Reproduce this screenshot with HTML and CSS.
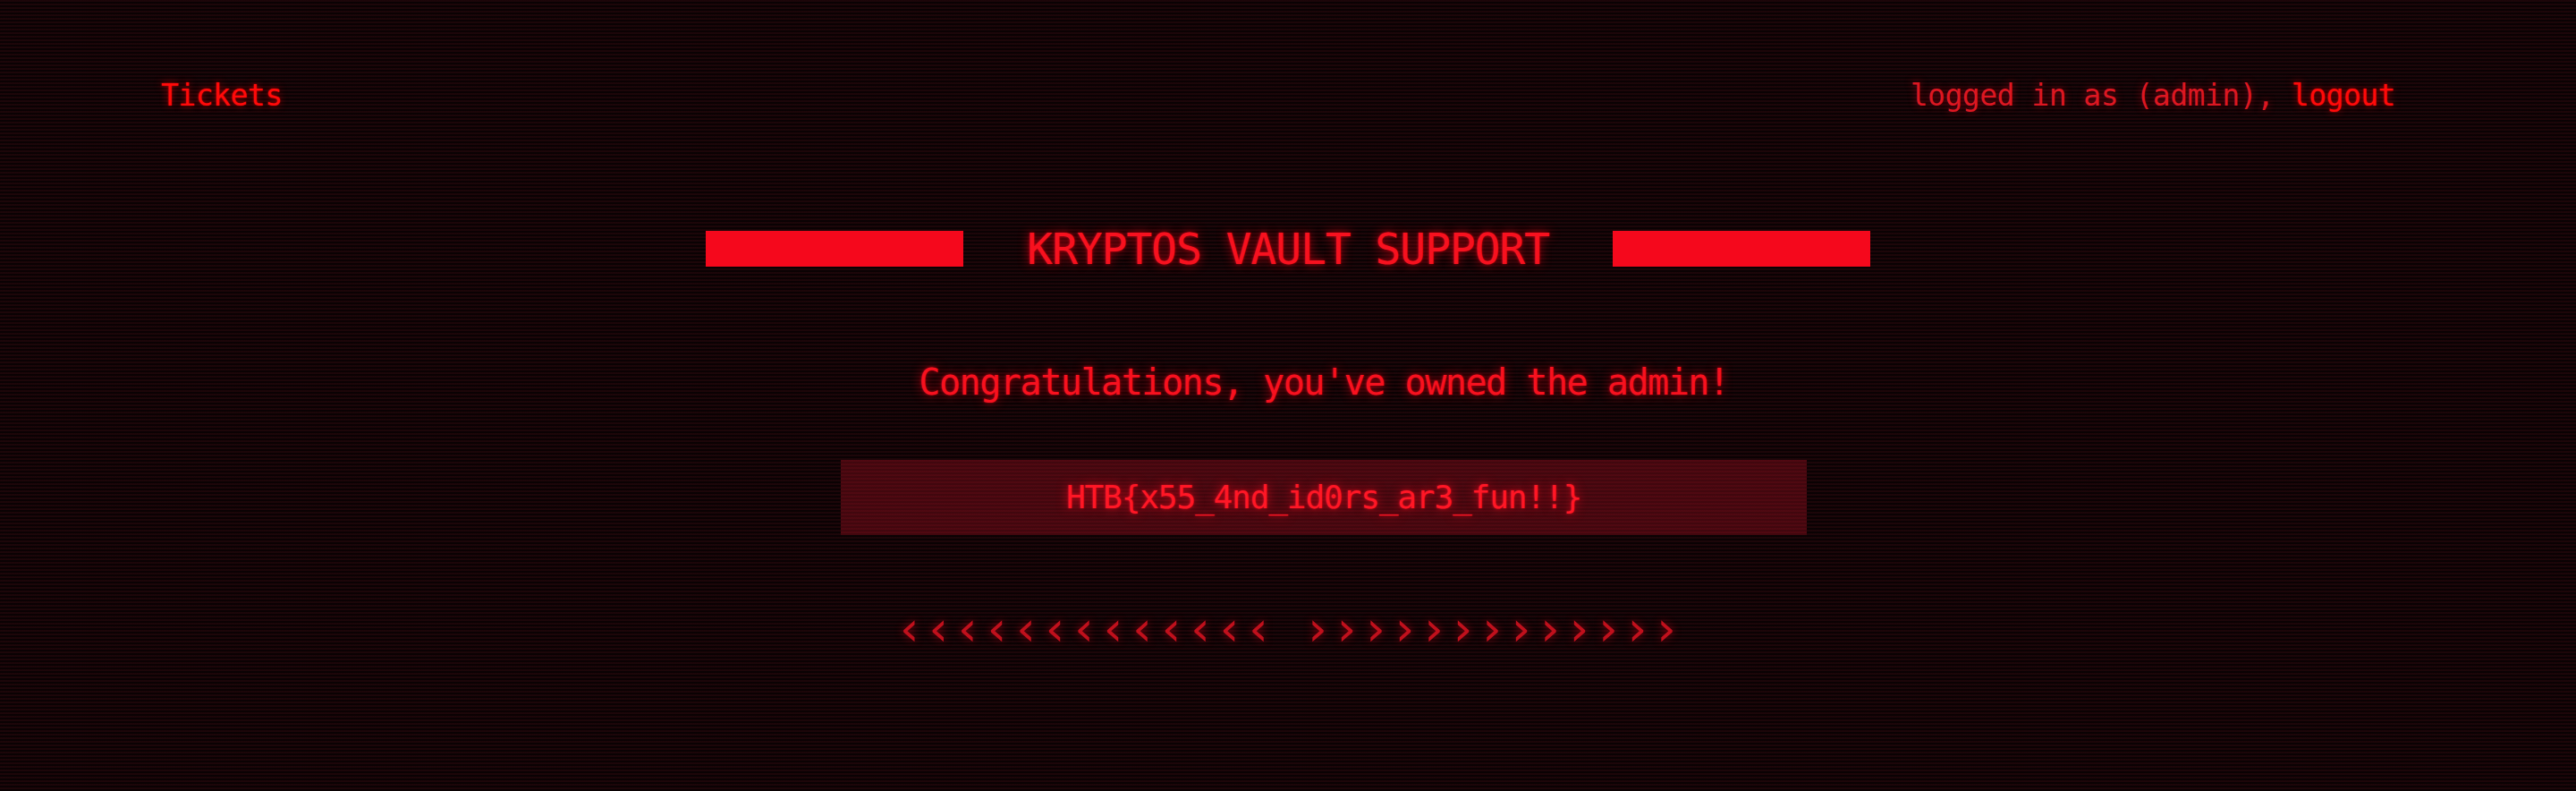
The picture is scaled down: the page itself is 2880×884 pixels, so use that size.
FILE: index.html
```html
<!DOCTYPE html>
<html lang="en">
<head>
<meta charset="utf-8">
<title>Kryptos Vault Support</title>
<link rel="stylesheet" href="styles.css">
</head>
<body>
<div class="page">
  <nav class="nav">
    <a class="nav-link" href="#">Tickets</a>
    <div class="nav-user">logged in as (admin), <a class="nav-link" href="#">logout</a></div>
  </nav>
  <main class="main">
    <div class="title-row">
      <span class="bar"></span>
      <h1 class="title">KRYPTOS VAULT SUPPORT</h1>
      <span class="bar"></span>
    </div>
    <p class="congrats">Congratulations, you've owned the admin!</p>
    <div class="flag-box"><span class="flag">HTB{x55_4nd_id0rs_ar3_fun!!}</span></div>
    <div class="chevrons">‹‹‹‹‹‹‹‹‹‹‹‹‹ ›››››››››››››</div>
  </main>
</div>
</body>
</html>
```
FILE: styles.css
```css
html, body {
  margin: 0;
  padding: 0;
}
body {
  width: 2880px;
  height: 884px;
  overflow: hidden;
  background-color: #0f0305;
  background-image: repeating-linear-gradient(to bottom,
    rgba(40, 8, 12, 0.55) 0px,
    rgba(40, 8, 12, 0.55) 2px,
    rgba(0, 0, 0, 0.35) 2px,
    rgba(0, 0, 0, 0.35) 4px);
  font-family: "DejaVu Sans Mono", "Liberation Mono", monospace;
  color: #f3111f;
}
.page {
  height: 884px;
}
.nav {
  display: flex;
  justify-content: space-between;
  align-items: flex-start;
  padding: 87px 202px 0 180px;
  font-size: 33px;
  line-height: 40px;
  letter-spacing: -0.5px;
}
.nav-link {
  color: #ff0a0a;
  text-decoration: none;
  text-shadow: 0 0 8px rgba(255, 0, 0, 0.6), 0 0 2px rgba(255, 0, 0, 0.6);
}
.nav-user {
  color: #dc1722;
  text-shadow: 0 0 8px rgba(220, 0, 20, 0.55);
}
.main {
  display: flex;
  flex-direction: column;
  align-items: center;
}
.title-row {
  margin-top: 127px;
  display: flex;
  align-items: center;
  gap: 71px;
}
.bar {
  display: block;
  width: 288px;
  height: 40px;
  background: #f5081c;
}
.title {
  margin: 0;
  font-weight: normal;
  font-size: 48px;
  line-height: 48px;
  letter-spacing: -1.1px;
  color: #f7111f;
  text-shadow: 0 0 12px rgba(255, 0, 20, 0.7), 0 0 3px rgba(255, 0, 20, 0.6);
}
.congrats {
  margin: 101px 0 0 80px;
  font-size: 40px;
  line-height: 48px;
  letter-spacing: -1.45px;
  color: #f7111f;
  text-shadow: 0 0 12px rgba(255, 0, 20, 0.65), 0 0 3px rgba(255, 0, 20, 0.6);
}
.flag-box {
  margin: 63px 0 0 80px;
  width: 1080px;
  height: 84px;
  background-color: #4a0810;
  background-image: repeating-linear-gradient(to bottom,
    rgba(90, 10, 20, 0.35) 0px,
    rgba(90, 10, 20, 0.35) 2px,
    rgba(0, 0, 0, 0.12) 2px,
    rgba(0, 0, 0, 0.12) 4px);
  display: flex;
  align-items: center;
  justify-content: center;
}
.flag {
  font-size: 36px;
  line-height: 36px;
  letter-spacing: -1.1px;
  color: #ff1726;
  text-shadow: 0 0 12px rgba(255, 10, 30, 0.8), 0 0 3px rgba(255, 10, 30, 0.6);
}
.chevrons {
  margin-top: 85px;
  font-size: 54px;
  line-height: 40px;
  height: 40px;
  letter-spacing: 0px;
  color: #c0101c;
  text-shadow: 0 0 10px rgba(200, 0, 20, 0.7);
  white-space: pre;
}
```
